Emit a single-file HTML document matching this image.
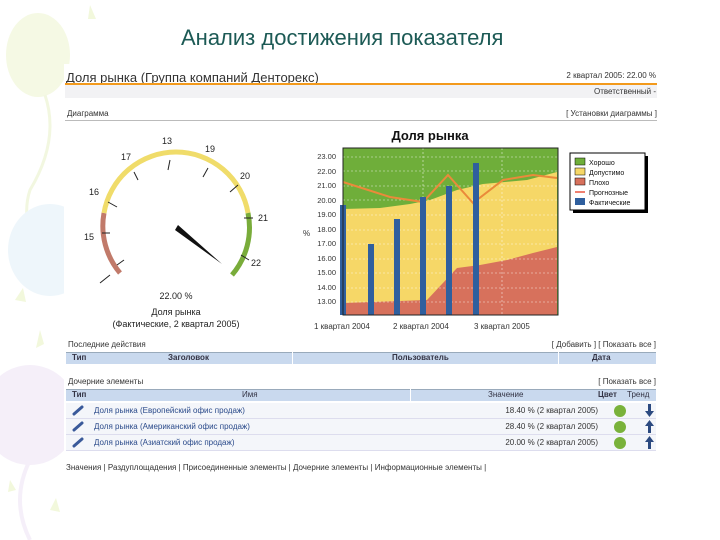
<!DOCTYPE html>
<html><head><meta charset="utf-8"><style>
body{margin:0;width:720px;height:540px;position:relative;background:#fff;font-family:"Liberation Sans","DejaVu Sans",sans-serif;overflow:hidden;color:#333}
.a{position:absolute;white-space:nowrap}
.s{font-size:8px}
.th{background:#c9d9ee;position:absolute;height:11px;font-size:8px;font-weight:bold;color:#334}
.row{position:absolute;left:66px;width:590px;height:15px;background:#f4f6fa;border-bottom:1px solid #dde}
.lnk{color:#2a4a8a}
</style></head><body>
<svg class="a" style="left:0;top:0" width="720" height="540">
<ellipse cx="38" cy="55" rx="32" ry="42" fill="#f5f9e4"/>
<path d="M45 95 Q60 140 30 190 Q20 220 40 260" stroke="#f2f7e0" stroke-width="3" fill="none"/>
<ellipse cx="50" cy="250" rx="42" ry="46" fill="#eef6fb"/>
<ellipse cx="30" cy="415" rx="48" ry="50" fill="#f5eff9"/>
<path d="M30 460 Q10 500 30 540" stroke="#f5eff9" stroke-width="4" fill="none"/>
<path d="M15 300 l8 -12 l3 14z M40 330 l-4 18 l8 -4z M10 480 l6 10 l-8 2z M50 510 l6 -12 l4 14z M90 5 l6 14 l-8 0z" fill="#f2f8dc"/>
</svg>
<div class="a" style="left:181px;top:25px;font-size:22px;color:#1c5a55">Анализ достижения показателя</div>
<div class="a" style="left:64px;top:64px;width:594px;height:420px;background:#fff"></div>
<div class="a" style="left:66px;top:70px;font-size:13px;color:#333">Доля рынка (Группа компаний Денторекс)</div>
<div class="a s" style="right:64px;top:71px">2 квартал 2005: 22.00 %</div>
<div class="a" style="left:65px;top:83px;width:592px;height:2px;background:#f39a1c"></div>
<div class="a" style="left:65px;top:85px;width:592px;height:13px;background:#f2f2f4"></div>
<div class="a s" style="right:64px;top:87px">Ответственный -</div>
<div class="a s" style="left:67px;top:109px">Диаграмма</div>
<div class="a s" style="right:63px;top:109px">[ Установки диаграммы ]</div>
<div class="a" style="left:65px;top:120px;width:592px;height:1px;background:#bbb"></div>

<svg class="a" style="left:0;top:0" width="720" height="540" font-family="Liberation Sans,sans-serif">
<g fill="none" stroke-width="5">
<path d="M120 273 A73 73 0 0 1 104 213" stroke="#c17a6a"/>
<path d="M104 213 A73 73 0 0 1 248 213" stroke="#f0dc6a"/>
<path d="M248 213 A73 73 0 0 1 232 275" stroke="#79ac3a"/>
</g>
<g stroke="#222" stroke-width="1">
<line x1="170" y1="160" x2="168" y2="170"/><line x1="208" y1="168" x2="203" y2="177"/><line x1="238" y1="185" x2="230" y2="192"/>
<line x1="134" y1="172" x2="138" y2="180"/><line x1="108" y1="202" x2="117" y2="207"/><line x1="102" y1="233" x2="110" y2="233"/>
<line x1="117" y1="265" x2="124" y2="260"/><line x1="241" y1="255" x2="249" y2="260"/><line x1="244" y1="218" x2="253" y2="218"/>
<line x1="100" y1="283" x2="110" y2="275"/>
</g>
<polygon points="176,226 180,229 222,264" fill="#111"/>
<polygon points="175,230 178,225 222,264" fill="#111"/>
<g font-size="9" fill="#222">
<text x="162" y="144">13</text><text x="205" y="152">19</text><text x="121" y="160">17</text><text x="240" y="179">20</text>
<text x="89" y="195">16</text><text x="258" y="221">21</text><text x="84" y="240">15</text><text x="251" y="266">22</text>
</g>
<text x="176" y="299" font-size="9" text-anchor="middle" fill="#222">22.00 %</text>
<text x="176" y="315" font-size="9" text-anchor="middle" fill="#222">Доля рынка</text>
<text x="176" y="327" font-size="9" text-anchor="middle" fill="#222">(Фактические, 2 квартал 2005)</text>
<text x="430" y="140" font-size="13" font-weight="bold" text-anchor="middle" fill="#111">Доля рынка</text>
<rect x="343" y="148" width="215" height="167" fill="#6fae3a"/>
<polygon points="343,209 380,208 410,204 430,200 457,190 483,184 527,180 557,172 557,315 343,315" fill="#f6d767"/>
<polygon points="343,303 400,301 427,300 457,268 480,265 507,260 533,253 557,247 557,315 343,315" fill="#d7715c"/>
<g stroke="#fff" stroke-dasharray="2,2" stroke-width="0.6" opacity="0.8">
<line x1="343" y1="157" x2="558" y2="157"/><line x1="343" y1="171" x2="558" y2="171"/><line x1="343" y1="186" x2="558" y2="186"/><line x1="343" y1="200" x2="558" y2="200"/><line x1="343" y1="215" x2="558" y2="215"/><line x1="343" y1="230" x2="558" y2="230"/><line x1="343" y1="244" x2="558" y2="244"/><line x1="343" y1="259" x2="558" y2="259"/><line x1="343" y1="273" x2="558" y2="273"/><line x1="343" y1="288" x2="558" y2="288"/><line x1="343" y1="302" x2="558" y2="302"/>
<line x1="423" y1="148" x2="423" y2="315"/><line x1="502" y1="148" x2="502" y2="315"/>
</g>
<polyline points="343,182 390,197 423,202 448,175 473,203 503,180 533,175 557,178" fill="none" stroke="#ea8a3a" stroke-width="2"/>
<g fill="#2f5f9e">
<rect x="340" y="205" width="6" height="110"/><rect x="368" y="244" width="6" height="71"/><rect x="394" y="219" width="6" height="96"/><rect x="420" y="197" width="6" height="118"/><rect x="446" y="186" width="6" height="129"/><rect x="473" y="163" width="6" height="152"/>
</g>
<rect x="343" y="148" width="215" height="167" fill="none" stroke="#222" stroke-width="1"/>
<g font-size="7.5" fill="#333" text-anchor="end">
<text x="336" y="159">23.00</text><text x="336" y="174">22.00</text><text x="336" y="188">21.00</text><text x="336" y="203">20.00</text><text x="336" y="217">19.00</text><text x="336" y="232">18.00</text><text x="336" y="246">17.00</text><text x="336" y="261">16.00</text><text x="336" y="275">15.00</text><text x="336" y="290">14.00</text><text x="336" y="304">13.00</text>
</g>
<text x="303" y="236" font-size="8" fill="#333">%</text>
<g font-size="8" fill="#333"><text x="314" y="329">1 квартал 2004</text><text x="393" y="329">2 квартал 2004</text><text x="474" y="329">3 квартал 2005</text></g>
<rect x="573" y="156" width="75" height="57" fill="#000"/>
<rect x="570" y="153" width="75" height="57" fill="#fff" stroke="#000"/>
<rect x="575" y="158" width="10" height="7" fill="#6fae3a" stroke="#000" stroke-width="0.5"/>
<rect x="575" y="168" width="10" height="7" fill="#f6d767" stroke="#000" stroke-width="0.5"/>
<rect x="575" y="178" width="10" height="7" fill="#d7715c" stroke="#000" stroke-width="0.5"/>
<line x1="575" y1="192" x2="585" y2="192" stroke="#f08070" stroke-width="2"/>
<rect x="575" y="198" width="10" height="7" fill="#2f5f9e"/>
<g font-size="7" fill="#111"><text x="589" y="165">Хорошо</text><text x="589" y="175">Допустимо</text><text x="589" y="185">Плохо</text><text x="589" y="195">Прогнозные</text><text x="589" y="205">Фактические</text></g>
</svg>

<div class="a s" style="left:68px;top:340px">Последние действия</div>
<div class="a s" style="right:64px;top:340px">[ Добавить ] [ Показать все ]</div>
<div class="th" style="left:66px;top:352px;width:590px;border-top:1px solid #9ab"></div>
<div class="a th" style="left:72px;top:353px">Тип</div>
<div class="a th" style="left:168px;top:353px">Заголовок</div>
<div class="a th" style="left:392px;top:353px">Пользователь</div>
<div class="a th" style="left:592px;top:353px">Дата</div>
<div class="a" style="left:292px;top:352px;width:1px;height:12px;background:#fff"></div>
<div class="a" style="left:558px;top:352px;width:1px;height:12px;background:#fff"></div>
<div class="a s" style="left:68px;top:377px">Дочерние элементы</div>
<div class="a s" style="right:64px;top:377px">[ Показать все ]</div>
<div class="th" style="left:66px;top:389px;width:590px;border-top:1px solid #9ab"></div>
<div class="a th" style="left:72px;top:390px">Тип</div>
<div class="a th" style="left:242px;top:390px;font-weight:normal">Имя</div>
<div class="a th" style="left:488px;top:390px;font-weight:normal">Значение</div>
<div class="a th" style="left:598px;top:390px">Цвет</div>
<div class="a th" style="left:627px;top:390px;font-weight:normal">Тренд</div>
<div class="a" style="left:410px;top:389px;width:1px;height:12px;background:#fff"></div>
<div class="row" style="top:403px"></div>
<div class="row" style="top:419px"></div>
<div class="row" style="top:435px"></div>
<div class="a s lnk" style="left:94px;top:406px">Доля рынка (Европейский офис продаж)</div>
<div class="a s lnk" style="left:94px;top:422px">Доля рынка (Американский офис продаж)</div>
<div class="a s lnk" style="left:94px;top:438px">Доля рынка (Азиатский офис продаж)</div>
<div class="a s" style="right:122px;top:406px">18.40 % (2 квартал 2005)</div>
<div class="a s" style="right:122px;top:422px">28.40 % (2 квартал 2005)</div>
<div class="a s" style="right:122px;top:438px">20.00 % (2 квартал 2005)</div>
<svg class="a" style="left:0;top:0" width="720" height="540">
<g stroke="#3a5a9a" stroke-width="3" stroke-linecap="round"><line x1="74" y1="414" x2="82" y2="407"/><line x1="74" y1="430" x2="82" y2="423"/><line x1="74" y1="446" x2="82" y2="439"/></g>
<g fill="#79b23a"><circle cx="620" cy="411" r="6"/><circle cx="620" cy="427" r="6"/><circle cx="620" cy="443" r="6"/></g>
<g fill="#2c4a80">
<path d="M648 404 h3 v7 h3 l-4.5 6 l-4.5 -6 h3z"/>
<path d="M648 433 h3 v-7 h3 l-4.5 -6 l-4.5 6 h3z"/>
<path d="M648 449 h3 v-7 h3 l-4.5 -6 l-4.5 6 h3z"/>
</g>
</svg>
<div class="a s" style="left:66px;top:463px">Значения | Раздуплощадения | Присоединенные элементы | Дочерние элементы | Информационные элементы |</div>
</body></html>
